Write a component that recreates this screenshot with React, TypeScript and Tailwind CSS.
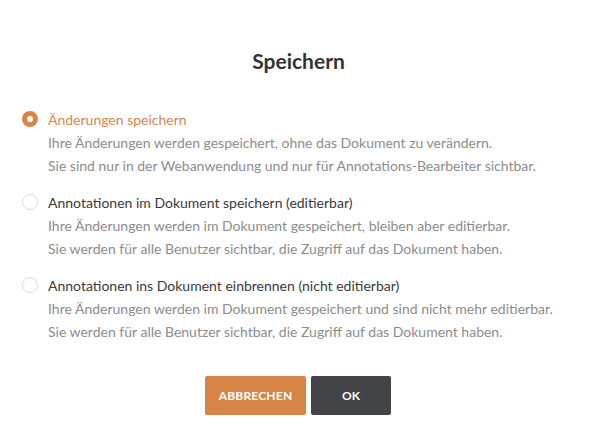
import { useState } from 'react';

const options = [
  {
    id: 'local',
    label: 'Änderungen speichern',
    lines: [
      'Ihre Änderungen werden gespeichert, ohne das Dokument zu verändern.',
      'Sie sind nur in der Webanwendung und nur für Annotations-Bearbeiter sichtbar.',
    ],
  },
  {
    id: 'editable',
    label: 'Annotationen im Dokument speichern (editierbar)',
    lines: [
      'Ihre Änderungen werden im Dokument gespeichert, bleiben aber editierbar.',
      'Sie werden für alle Benutzer sichtbar, die Zugriff auf das Dokument haben.',
    ],
  },
  {
    id: 'flatten',
    label: 'Annotationen ins Dokument einbrennen (nicht editierbar)',
    lines: [
      'Ihre Änderungen werden im Dokument gespeichert und sind nicht mehr editierbar.',
      'Sie werden für alle Benutzer sichtbar, die Zugriff auf das Dokument haben.',
    ],
  },
];

export default function App() {
  const [selected, setSelected] = useState('local');

  return (
    <div className="w-[597px] h-[443px] bg-white font-['Lato','Noto_Sans',sans-serif] flex flex-col">
      <h1 className="text-center text-[21px] font-bold text-[#333333] mt-[48px] leading-[26px]">Speichern</h1>

      <div className="flex flex-col gap-[14px] pl-[22px] mt-[34px]">
        {options.map((o) => {
          const active = selected === o.id;
          return (
            <label key={o.id} className="flex gap-[10px] cursor-pointer" onClick={() => setSelected(o.id)}>
              <span
                className={
                  active
                    ? 'mt-[3px] w-4 h-4 rounded-full bg-[#d68546] flex items-center justify-center shrink-0'
                    : 'mt-[3px] w-4 h-4 rounded-full border border-[#dcdcdc] bg-white shrink-0'
                }
              >
                {active && <span className="w-[6px] h-[6px] rounded-full bg-white" />}
              </span>
              <div className="flex flex-col text-[14px] leading-[23px]">
                <span className={active ? 'text-[#d68546]' : 'text-[#3a3a3a]'}>{o.label}</span>
                {o.lines.map((l) => (
                  <span key={l} className="text-[#8c8c8c]">{l}</span>
                ))}
              </div>
            </label>
          );
        })}
      </div>

      <div className="flex justify-center gap-[5px] mt-[33px] pr-px">
        <button className="w-[101px] h-[39px] rounded-[2px] bg-[#d68546] text-white text-[12px] font-bold tracking-[0.2px]">
          ABBRECHEN
        </button>
        <button className="w-[80px] h-[39px] rounded-[2px] bg-[#434447] text-white text-[12px] font-bold">
          OK
        </button>
      </div>
    </div>
  );
}
